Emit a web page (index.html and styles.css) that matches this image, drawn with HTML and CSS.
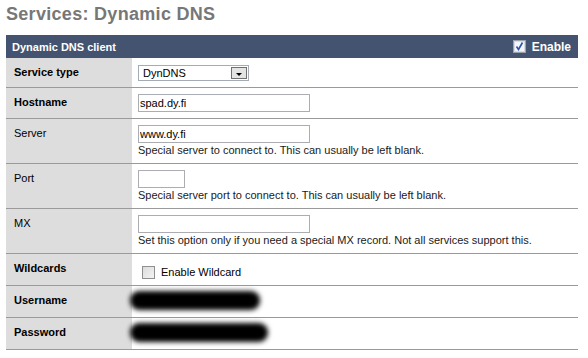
FILE: index.html
```html
<!DOCTYPE html>
<html>
<head>
<meta charset="utf-8">
<link rel="stylesheet" href="styles.css">
</head>
<body>
<div class="page">
  <h1 class="title">Services: Dynamic DNS</h1>
  <div class="panel">
    <div class="panel-head">
      <span>Dynamic DNS client</span>
      <span class="enable">
        <svg class="hcheck" width="13" height="13" viewBox="0 0 13 13">
          <rect x="0.5" y="0.5" width="12" height="12" fill="#d9dde3" stroke="#9aa3ad"/>
          <rect x="2" y="2" width="9" height="9" fill="#f4f6f9"/>
          <path d="M3.5 6.5 L5.5 9.5 L9.5 2.5" fill="none" stroke="#2a4fb0" stroke-width="1.6"/>
        </svg>
        Enable
      </span>
    </div>

    <div class="row">
      <div class="lbl b">Service type</div>
      <div class="val sel">
        <div class="select">
          <span class="select-text">DynDNS</span>
          <span class="select-btn"><span class="arrow"></span></span>
        </div>
      </div>
    </div>

    <div class="row">
      <div class="lbl b">Hostname</div>
      <div class="val"><input class="txt" type="text" value="spad.dy.fi"></div>
    </div>

    <div class="row">
      <div class="lbl">Server</div>
      <div class="val">
        <input class="txt" type="text" value="www.dy.fi">
        <div class="desc">Special server to connect to. This can usually be left blank.</div>
      </div>
    </div>

    <div class="row">
      <div class="lbl">Port</div>
      <div class="val">
        <input class="txt port" type="text" value="">
        <div class="desc">Special server port to connect to. This can usually be left blank.</div>
      </div>
    </div>

    <div class="row">
      <div class="lbl">MX</div>
      <div class="val">
        <input class="txt" type="text" value="">
        <div class="desc">Set this option only if you need a special MX record. Not all services support this.</div>
      </div>
    </div>

    <div class="row">
      <div class="lbl b">Wildcards</div>
      <div class="val wild">
        <span class="cbox"></span>
        <span>Enable Wildcard</span>
      </div>
    </div>

    <div class="row">
      <div class="lbl b">Username</div>
      <div class="val red"><div class="redact user"></div></div>
    </div>

    <div class="row">
      <div class="lbl b">Password</div>
      <div class="val red"><div class="redact pass"></div></div>
    </div>
  </div>
</div>
</body>
</html>
```

FILE: styles.css
```css
body {
  margin: 0;
  background: #fff;
  font-family: "Liberation Sans", Arial, sans-serif;
  font-size: 11px;
  color: #000;
}

.page {
  padding: 4px 10px 0 6px;
}

.title {
  margin: 0 0 10px;
  font-size: 18px;
  line-height: 21px;
  font-weight: bold;
  color: #777;
  letter-spacing: 0.3px;
}

.panel-head {
  height: 23px;
  background: #445470;
  color: #fff;
  font-weight: bold;
  display: flex;
  align-items: center;
  justify-content: space-between;
  padding: 0 7px 0 6px;
}

.enable {
  display: flex;
  align-items: center;
  gap: 6px;
  font-size: 12px;
}

.hcheck {
  display: block;
}

.row {
  display: grid;
  grid-template-columns: 126px 1fr;
  border-bottom: 1px solid #9a9a9a;
}

.lbl {
  background: #dddddd;
  padding: 8px 8px;
  line-height: 13px;
}

.lbl.b {
  font-weight: bold;
}

.val {
  padding: 6px 6px 6px;
}

.val.sel {
  padding: 7px 6px 6px;
}

.select {
  box-sizing: border-box;
  width: 111px;
  height: 16px;
  border: 1px solid #a5acb5;
  display: flex;
  align-items: center;
  justify-content: space-between;
  padding: 0 1px 0 4px;
  line-height: 14px;
}

.select-btn {
  box-sizing: border-box;
  width: 16px;
  height: 12px;
  border: 1px solid #707070;
  background: #e4e4e4;
  display: flex;
  align-items: center;
  justify-content: center;
}

.arrow {
  width: 0;
  height: 0;
  border-left: 3px solid transparent;
  border-right: 3px solid transparent;
  border-top: 3px solid #000;
  margin-top: 2px;
}

.txt {
  display: block;
  box-sizing: border-box;
  width: 172px;
  height: 18px;
  margin: 0;
  border: 1px solid #abadb3;
  padding: 0 1px;
  font-family: inherit;
  font-size: 11px;
  color: #000;
  background: #fff;
  outline: none;
}

.txt.port {
  width: 47px;
}

.desc {
  line-height: 14px;
  color: #1a1a1a;
}

.val.wild {
  display: flex;
  align-items: center;
  gap: 6px;
  padding: 11px 6px 6px 10px;
  line-height: 14px;
}

.cbox {
  box-sizing: border-box;
  width: 13px;
  height: 13px;
  border: 1px solid #8e8f8f;
  background: linear-gradient(135deg, #dcdcdc, #f4f4f4);
}

.val.red {
  height: 31px;
  box-sizing: border-box;
  padding: 5px 6px 0;
}

.redact {
  height: 19px;
  margin-left: -8px;
  background: #000;
  border-radius: 9px;
  filter: blur(2.5px);
}

.redact.user {
  width: 130px;
}

.redact.pass {
  width: 138px;
}
```
